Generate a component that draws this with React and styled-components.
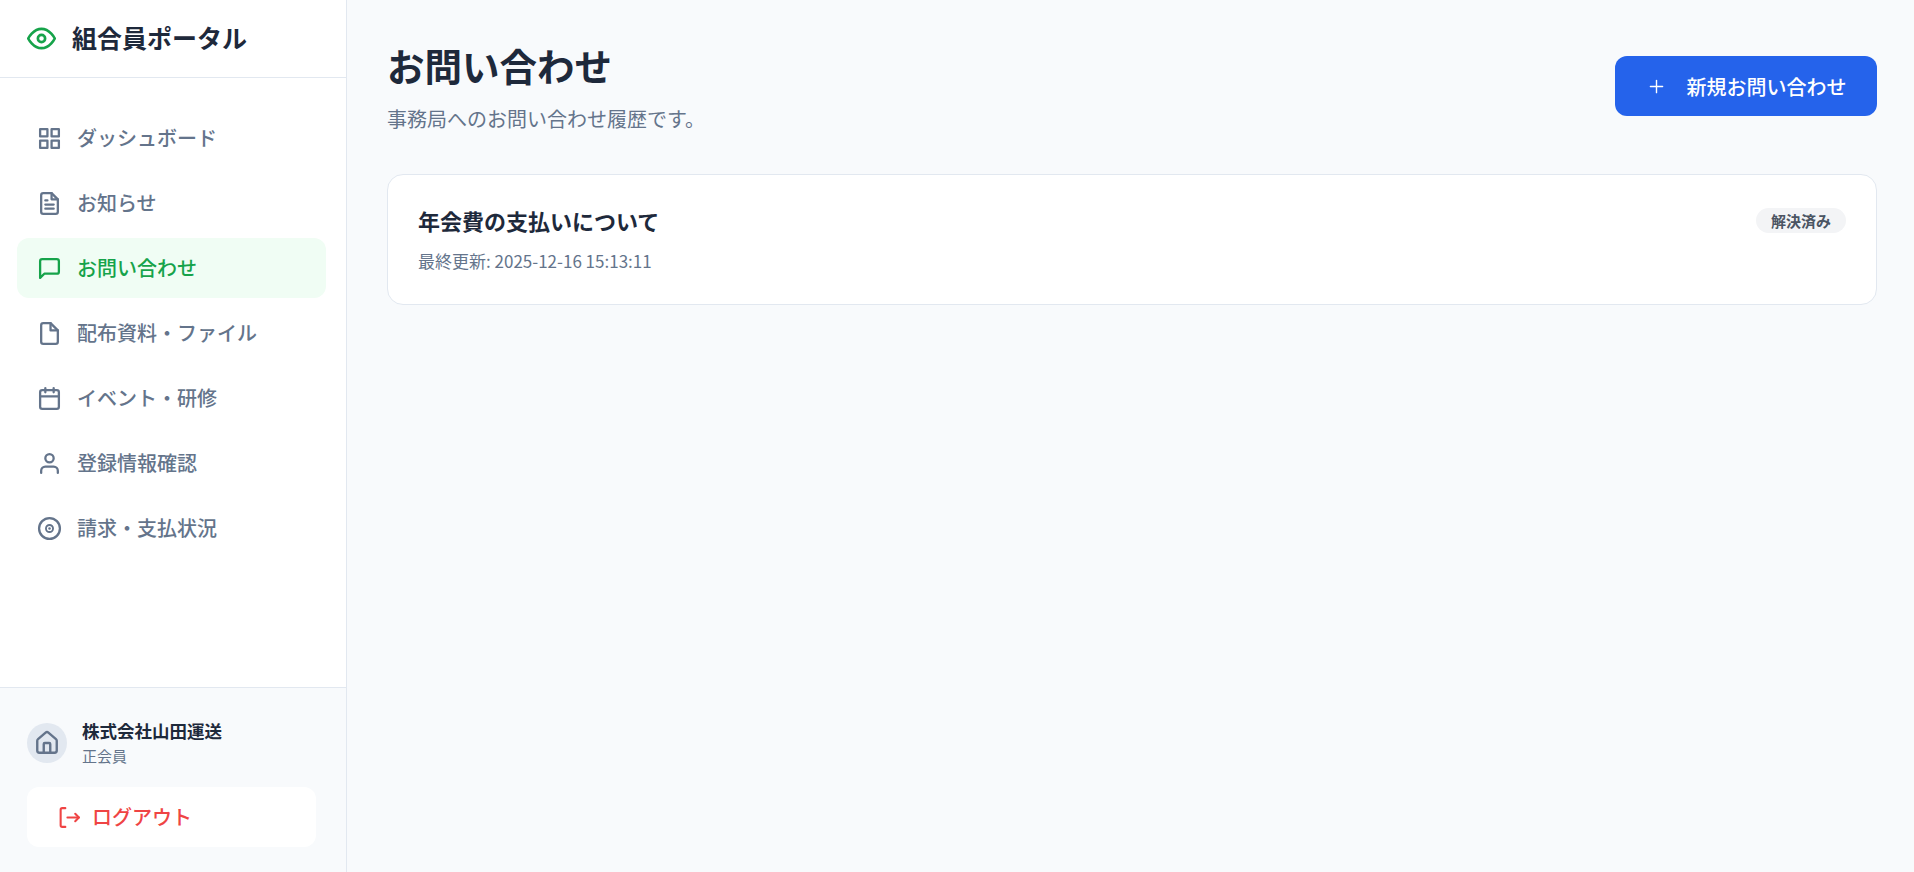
import React from 'react'
import styled, { createGlobalStyle } from 'styled-components'
import { FiGrid, FiFileText, FiMessageSquare, FiFile, FiCalendar, FiUser, FiPlus, FiEye } from 'react-icons/fi'
import { Home } from 'lucide-react'

const Global = createGlobalStyle`
  html, body { margin: 0; height: 100%; }
  body {
    font-family: "Noto Sans CJK JP", "Noto Sans", sans-serif;
    background: #f8fafc;
    color: #1e293b;
  }
  #root { height: 100%; }
  * { box-sizing: border-box; }
`

const Layout = styled.div`
  display: flex;
  height: 872px;
  overflow: hidden;
`

const Sidebar = styled.aside`
  width: 347px;
  flex-shrink: 0;
  display: flex;
  flex-direction: column;
  background: #fff;
  border-right: 1px solid #e2e8f0;
`

const Brand = styled.div`
  height: 78px;
  display: flex;
  align-items: center;
  gap: 16px;
  padding: 0 27px;
  border-bottom: 1px solid #e2e8f0;
  font-size: 25px;
  font-weight: 700;
  color: #1e293b;
  svg { color: #16a34a; font-size: 29px; stroke-width: 2.2; }
`

const BrandName = styled.span`
  margin-bottom: 4px;
`

const Nav = styled.nav`
  flex: 1;
  display: flex;
  flex-direction: column;
  gap: 5px;
  padding: 30px 20px 0 17px;
`

const NavItem = styled.a`
  height: 60px;
  display: flex;
  align-items: center;
  gap: 15px;
  padding: 0 20px;
  border-radius: 12px;
  font-size: 20px;
  font-weight: 500;
  color: ${({ $active }) => ($active ? '#16a34a' : '#64748b')};
  background: ${({ $active }) => ($active ? '#f0fdf4' : 'transparent')};
  svg { font-size: 25px; flex-shrink: 0; stroke-width: 2.2; }
`

const Label = styled.span`
  margin-bottom: 2px;
`

const Footer = styled.div`
  padding: 30px 30px 25px 27px;
  background: #f8fafc;
  border-top: 1px solid #e2e8f0;
`

const Member = styled.div`
  display: flex;
  align-items: center;
  gap: 15px;
  margin-bottom: 19px;
`

const Avatar = styled.div`
  width: 40px;
  height: 40px;
  border-radius: 50%;
  background: #e2e8f0;
  color: #64748b;
  display: flex;
  align-items: center;
  justify-content: center;
`

const Company = styled.div`
  margin-bottom: 1px;
  font-size: 17.5px;
  font-weight: 700;
  line-height: 26px;
  color: #1e293b;
`

const Rank = styled.div`
  padding-bottom: 1px;
  font-size: 15px;
  line-height: 22px;
  color: #64748b;
`

const Logout = styled.a`
  height: 60px;
  display: flex;
  align-items: center;
  gap: 10px;
  padding: 0 30px;
  background: #fff;
  border-radius: 12px;
  font-size: 20px;
  font-weight: 500;
  color: #ef4444;
`

const Main = styled.main`
  flex: 1;
  padding: 37px 37px 40px 40px;
`

const PageHeader = styled.header`
  display: flex;
  align-items: center;
  justify-content: space-between;
  margin-bottom: 39px;
`

const PageTitle = styled.h1`
  margin: 0;
  font-size: 37.5px;
  font-weight: 700;
  line-height: 56px;
  color: #1e293b;
`

const PageLead = styled.p`
  margin: 10px 0 0;
  padding-bottom: 1px;
  font-size: 20px;
  line-height: 31px;
  color: #64748b;
`

const PrimaryButton = styled.button`
  width: 262px;
  height: 60px;
  display: flex;
  align-items: center;
  justify-content: center;
  gap: 20px;
  border: 0;
  border-radius: 12px;
  background: #2563eb;
  color: #fff;
  font-family: inherit;
  font-size: 20px;
  font-weight: 500;
  svg { font-size: 21px; stroke-width: 1.6; }
`

const Card = styled.article`
  height: 131px;
  padding: 28px 30px;
  background: #fff;
  border: 1px solid #e2e8f0;
  border-radius: 16px;
  display: flex;
  justify-content: space-between;
  align-items: flex-start;
`

const CardTitle = styled.h2`
  margin: 0;
  font-size: 22px;
  font-weight: 700;
  line-height: 34px;
  color: #1e293b;
`

const CardMeta = styled.div`
  margin-top: 12px;
  font-size: 17px;
  line-height: 24px;
  color: #64748b;
`

const Badge = styled.span`
  margin-top: 5px;
  padding: 0 15px;
  height: 25px;
  display: inline-flex;
  align-items: center;
  border-radius: 13px;
  background: #f3f4f6;
  color: #4b5563;
  font-size: 15px;
  font-weight: 700;
`

// ring with a small ring and dot inside, none of the packs has this one
const TargetIcon = () => (
  <svg width="1em" height="1em" viewBox="0 0 24 24" fill="none" stroke="currentColor">
    <circle cx="12" cy="12" r="10" />
    <circle cx="12" cy="12" r="3.400" strokeWidth="1.800" />
    <circle cx="12" cy="12" r="1.200" fill="currentColor" stroke="none" />
  </svg>
)

const LogoutIcon = () => (
  <svg width="25" height="25" viewBox="0 0 24 24" fill="none" stroke="currentColor" strokeWidth="2" strokeLinecap="round" strokeLinejoin="round">
    <path d="M8 21H5a1.5 1.5 0 0 1-1.500-1.500v-15A1.500 1.500 0 0 1 5 3h3" />
    <path d="M10 12h11" />
    <path d="M17.500 8.500l3.500 3.500-3.500 3.500" />
  </svg>
)

const navItems = [
  { label: 'ダッシュボード', Icon: FiGrid },
  { label: 'お知らせ', Icon: FiFileText },
  { label: 'お問い合わせ', Icon: FiMessageSquare, active: true },
  { label: '配布資料・ファイル', Icon: FiFile },
  { label: 'イベント・研修', Icon: FiCalendar },
  { label: '登録情報確認', Icon: FiUser },
  { label: '請求・支払状況', Icon: TargetIcon },
]

export default function App() {
  return (
    <Layout>
      <Global />
      <Sidebar>
        <Brand><FiEye /><BrandName>組合員ポータル</BrandName></Brand>
        <Nav>
          {navItems.map(({ label, Icon, active }) => (
            <NavItem key={label} $active={active}><Icon /><Label>{label}</Label></NavItem>
          ))}
        </Nav>
        <Footer>
          <Member>
            <Avatar><Home size={26} strokeWidth={2.2} /></Avatar>
            <div>
              <Company>株式会社山田運送</Company>
              <Rank>正会員</Rank>
            </div>
          </Member>
          <Logout><LogoutIcon /><Label>ログアウト</Label></Logout>
        </Footer>
      </Sidebar>
      <Main>
        <PageHeader>
          <div>
            <PageTitle>お問い合わせ</PageTitle>
            <PageLead>事務局へのお問い合わせ履歴です。</PageLead>
          </div>
          <PrimaryButton><FiPlus />新規お問い合わせ</PrimaryButton>
        </PageHeader>
        <Card>
          <div>
            <CardTitle>年会費の支払いについて</CardTitle>
            <CardMeta>最終更新: 2025-12-16 15:13:11</CardMeta>
          </div>
          <Badge>解決済み</Badge>
        </Card>
      </Main>
    </Layout>
  )
}
